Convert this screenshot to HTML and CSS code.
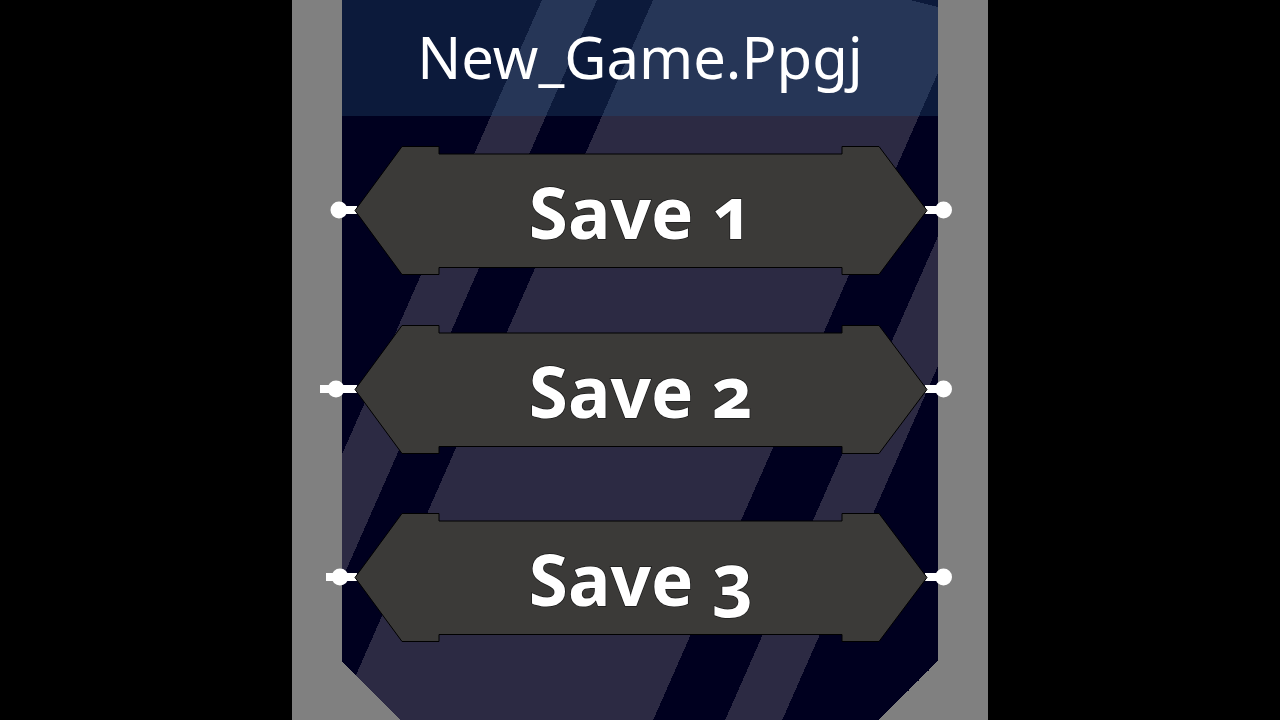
FILE: index.html
```html
<!DOCTYPE html>
<html lang="en">
<head>
<meta charset="utf-8">
<title>New_Game.Ppgj</title>
<link rel="stylesheet" href="styles.css">
</head>
<body>
<div class="frame">
  <div class="panel">
    <header class="title-bar">
      <h1 class="title">New_Game.Ppgj</h1>
    </header>
    <div class="saves">
      <div class="save-row">
        <svg class="pin pin-left" viewBox="0 0 37 20" width="37" height="20"><rect x="26" y="6" width="11" height="8"/><circle cx="19" cy="10" r="8.5"/></svg>
        <div class="save-btn">
          <svg class="save-shape" viewBox="0 0 572 129" width="572" height="129"><polygon points="0,64.5 47,0.5 84,0.5 84,8 487,8 487,0.5 524,0.5 572,64.5 524,128.5 487,128.5 487,121.5 84,121.5 84,128.5 47,128.5"/></svg>
          <span class="save-label">Save 1</span>
        </div>
        <svg class="pin pin-right" viewBox="0 0 28 20" width="28" height="20"><rect x="0" y="6" width="18" height="8"/><circle cx="18.5" cy="10" r="8.5"/></svg>
      </div>
      <div class="save-row">
        <svg class="pin pin-left" viewBox="0 0 37 20" width="37" height="20"><rect x="0" y="6" width="37" height="8"/><circle cx="16" cy="10" r="8.5"/></svg>
        <div class="save-btn">
          <svg class="save-shape" viewBox="0 0 572 129" width="572" height="129"><polygon points="0,64.5 47,0.5 84,0.5 84,8 487,8 487,0.5 524,0.5 572,64.5 524,128.5 487,128.5 487,121.5 84,121.5 84,128.5 47,128.5"/></svg>
          <span class="save-label">Save 2</span>
        </div>
        <svg class="pin pin-right" viewBox="0 0 28 20" width="28" height="20"><rect x="0" y="6" width="18" height="8"/><circle cx="18.5" cy="10" r="8.5"/></svg>
      </div>
      <div class="save-row save-row-last">
        <svg class="pin pin-left" viewBox="0 0 37 20" width="37" height="20"><rect x="6" y="6" width="31" height="8"/><circle cx="20" cy="10" r="8.5"/></svg>
        <div class="save-btn">
          <svg class="save-shape" viewBox="0 0 572 129" width="572" height="129"><polygon points="0,64.5 47,0.5 84,0.5 84,8 487,8 487,0.5 524,0.5 572,64.5 524,128.5 487,128.5 487,121.5 84,121.5 84,128.5 47,128.5"/></svg>
          <span class="save-label">Save 3</span>
        </div>
        <svg class="pin pin-right" viewBox="0 0 28 20" width="28" height="20"><rect x="0" y="6" width="18" height="8"/><circle cx="18.5" cy="10" r="8.5"/></svg>
      </div>
    </div>
  </div>
</div>
</body>
</html>
```

FILE: styles.css
```css
html, body {
  margin: 0;
  padding: 0;
  background: #000;
  height: 720px;
  overflow: hidden;
}

.frame {
  width: 596px;
  height: 720px;
  margin: 0 auto;
  padding: 0 50px;
  background: #808080;
}

.panel {
  height: 720px;
  display: flex;
  flex-direction: column;
  background:
    linear-gradient(to top right, #808080 50%, transparent 50%) left bottom / 58px 59px no-repeat,
    linear-gradient(to top left, #808080 50%, transparent 50%) right bottom / 59px 59px no-repeat,
    linear-gradient(113.75deg,
      #00001f 0, #00001f 183px,
      #2c2a43 183px, #2c2a43 233.4px,
      #00001f 233.4px, #00001f 284.7px,
      #2c2a43 284.7px, #2c2a43 574.8px,
      #00001f 574.8px, #00001f 640.7px,
      #2c2a43 640.7px, #2c2a43 692.9px,
      #00001f 692.9px);
}

.title-bar {
  height: 116px;
  flex: none;
  background:
    linear-gradient(to bottom left, #0c1a3b 50%, transparent 50%) right top / 28px 7px no-repeat,
    linear-gradient(113.75deg,
      #0c1a3b 0, #0c1a3b 183px,
      #263657 183px, #263657 233.4px,
      #0c1a3b 233.4px, #0c1a3b 284.7px,
      #263657 284.7px, #263657 574.8px,
      #0c1a3b 574.8px);
}

.title {
  margin: 0;
  font-family: "Noto Sans", "Open Sans", sans-serif;
  font-weight: 400;
  font-size: 58px;
  line-height: 113px;
  color: #fff;
  text-align: center;
}

.saves {
  display: flex;
  flex-direction: column;
  gap: 50px;
  padding-top: 29.5px;
}

.save-row {
  display: flex;
  align-items: center;
  margin-left: -22px;
  height: 129px;
}

.save-row-last {
  margin-top: 9px;
}

.pin {
  flex: none;
  display: block;
  fill: #fff;
}

.pin-left {
  margin-right: -2px;
}

.pin-right {
  margin-left: -2px;
}

.save-btn {
  position: relative;
  z-index: 1;
  flex: none;
  width: 572px;
  height: 129px;
  display: grid;
}

.save-shape {
  grid-area: 1 / 1;
  display: block;
  overflow: visible;
  fill: #3b3a38;
  stroke: #000;
  stroke-width: 1;
}

.save-label {
  grid-area: 1 / 1;
  justify-self: center;
  align-self: start;
  margin-top: 30px;
  font-family: "Noto Sans", "Open Sans", sans-serif;
  font-weight: 700;
  font-size: 71px;
  line-height: 71px;
  color: #fff;
  font-variant-numeric: oldstyle-nums;
  -webkit-text-stroke: 1.5px #1a1a1a;
  paint-order: stroke fill;
}
```
